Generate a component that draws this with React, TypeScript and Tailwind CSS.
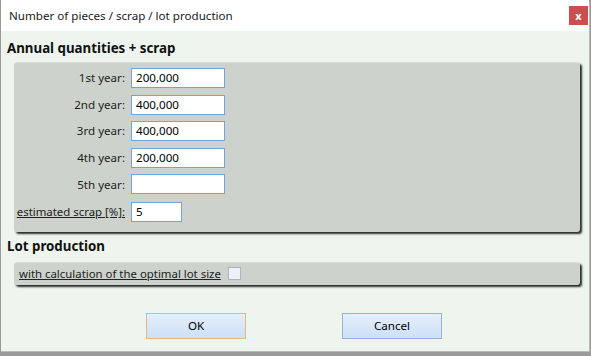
const font = { fontFamily: '"Noto Sans", "Open Sans", sans-serif' };

const years = [
  { label: "1st year:", value: "200,000" },
  { label: "2nd year:", value: "400,000" },
  { label: "3rd year:", value: "400,000" },
  { label: "4th year:", value: "200,000" },
  { label: "5th year:", value: "" },
];

const Field = ({ value, wide = true }: { value: string; wide?: boolean }) => (
  <div
    className={`flex h-[20px] items-center border border-[#7aa0dc] bg-white pl-[4px] text-[11.6px] text-black ${
      wide ? "w-[94px]" : "w-[51px]"
    }`}
  >
    {value}
  </div>
);

export default function App() {
  return (
    <div className="h-[356px] w-[591px] overflow-hidden bg-[#9a9a9a] text-[#111]" style={font}>
      <div className="ml-px flex h-[352px] w-[589px] flex-col rounded-tr-[4px] border-r border-b border-[#b9b9b9] bg-[#eef4ee]">
        <div className="flex h-[31px] shrink-0 items-center justify-between bg-white pl-[8px] pr-[1px]">
          <span className="text-[11.6px] text-[#1a1a1a]">Number of pieces / scrap / lot production</span>
          <div className="flex h-[19px] w-[19px] items-center justify-center bg-[#c9504f] text-[11px] font-bold leading-none text-white">
            x
          </div>
        </div>

        <div className="flex flex-col px-[13px]">
          <h2 className="mt-[7px] -ml-[7px] text-[13.3px] font-bold leading-[20px]">Annual quantities + scrap</h2>
          <div className="mt-[4px] flex w-[566px] flex-col gap-[6.6px] rounded-[3px] border-t border-[#dadfd9] bg-[#cdd3cc] pt-[5px] pb-[10px] shadow-[2px_2px_2px_#2a2e2a]">
            {years.map((y) => (
              <div key={y.label} className="flex items-center">
                <span className="w-[112px] whitespace-nowrap pr-[1px] text-right text-[11.6px] text-[#222]">{y.label}</span>
                <div className="ml-[5px]">
                  <Field value={y.value} />
                </div>
              </div>
            ))}
            <div className="flex items-center">
              <span className="w-[112px] whitespace-nowrap pr-[1px] text-right text-[11.4px] text-[#222] underline">
                estimated scrap [%]:
              </span>
              <div className="ml-[5px] mt-[1px]">
                <Field value="5" wide={false} />
              </div>
            </div>
          </div>

          <h2 className="mt-[4px] -ml-[7px] text-[13.3px] font-bold leading-[20px]">Lot production</h2>
          <div className="mt-[6px] flex h-[23px] w-[566px] items-center rounded-[3px] border-t border-[#dadfd9] bg-[#cdd3cc] pl-[5px] shadow-[2px_2px_2px_#2a2e2a]">
            <span className="text-[11.4px] text-[#222] underline">with calculation of the optimal lot size</span>
            <div className="ml-[7px] h-[13px] w-[13px] border border-[#a6b4c8] bg-[#eef2f7]" />
          </div>

          <div className="mt-[28px] flex justify-center gap-[96px] pr-[2px]">
            <div className="flex h-[26px] w-[100px] items-center justify-center border border-[#e8b67e] bg-gradient-to-b from-[#e6effb] to-[#cce0f8] text-[11.6px] text-black">
              OK
            </div>
            <div className="flex h-[26px] w-[100px] items-center justify-center border border-[#97b5dc] bg-gradient-to-b from-[#e6effb] to-[#cce0f8] text-[11.6px] text-black">
              Cancel
            </div>
          </div>
        </div>
      </div>
    </div>
  );
}
